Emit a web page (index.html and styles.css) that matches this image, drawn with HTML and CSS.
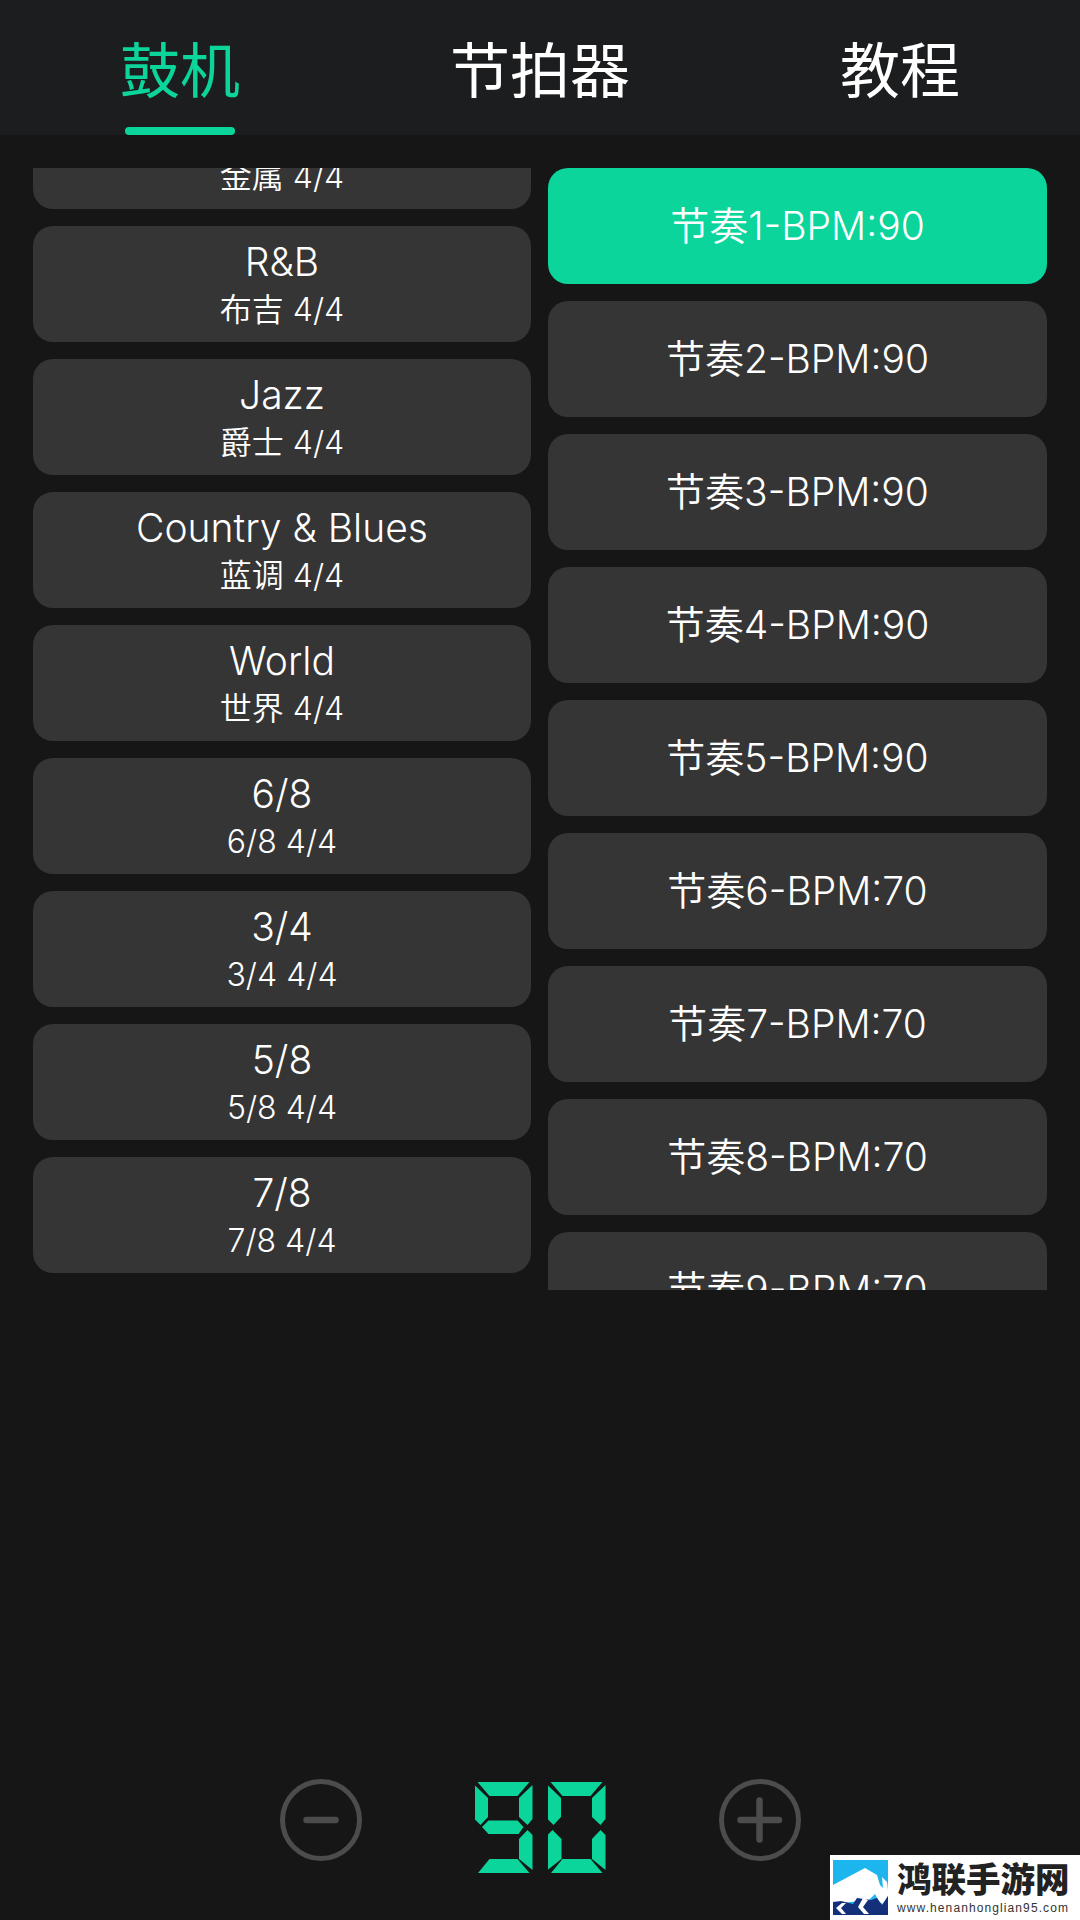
FILE: index.html
```html
<!DOCTYPE html>
<html lang="zh-CN">
<head>
  <meta charset="UTF-8" />
  <meta name="viewport" content="width=device-width, initial-scale=1.0"/>
  <title>鼓机</title>
  <link rel="stylesheet" href="styles.css">
</head>
<body>
  <nav class="tabs">
    <a class="tab active">鼓机</a>
    <a class="tab">节拍器</a>
    <a class="tab">教程</a>
  </nav>

  <main class="lists">
    <div class="list">
      <div class="list-inner scrolled">
        <div class="card"><div class="title">Metal</div><div class="sub">金属 4/4</div></div>
        <div class="card"><div class="title">R&amp;B</div><div class="sub">布吉 4/4</div></div>
        <div class="card"><div class="title">Jazz</div><div class="sub">爵士 4/4</div></div>
        <div class="card"><div class="title">Country &amp; Blues</div><div class="sub">蓝调 4/4</div></div>
        <div class="card"><div class="title">World</div><div class="sub">世界 4/4</div></div>
        <div class="card"><div class="title">6/8</div><div class="sub">6/8 4/4</div></div>
        <div class="card"><div class="title">3/4</div><div class="sub">3/4 4/4</div></div>
        <div class="card"><div class="title">5/8</div><div class="sub">5/8 4/4</div></div>
        <div class="card"><div class="title">7/8</div><div class="sub">7/8 4/4</div></div>
      </div>
    </div>
    <div class="list">
      <div class="list-inner">
        <div class="card selected"><div class="title">节奏1-BPM:90</div></div>
        <div class="card"><div class="title">节奏2-BPM:90</div></div>
        <div class="card"><div class="title">节奏3-BPM:90</div></div>
        <div class="card"><div class="title">节奏4-BPM:90</div></div>
        <div class="card"><div class="title">节奏5-BPM:90</div></div>
        <div class="card"><div class="title">节奏6-BPM:70</div></div>
        <div class="card"><div class="title">节奏7-BPM:70</div></div>
        <div class="card"><div class="title">节奏8-BPM:70</div></div>
        <div class="card"><div class="title">节奏9-BPM:70</div></div>
      </div>
    </div>
  </main>

  <section class="tempo">
    <svg class="round-btn" viewBox="0 0 82 82" aria-label="减">
      <circle cx="41" cy="41" r="38.5" />
      <line x1="26.5" y1="41" x2="55.5" y2="41" />
    </svg>

    <!-- seven segment readout, one span per lit segment -->
    <div class="readout" role="img" aria-label="90">
      <div class="digit">
        <span class="seg seg-a"></span><span class="seg seg-b"></span><span class="seg seg-c"></span>
        <span class="seg seg-d"></span><span class="seg seg-f"></span><span class="seg seg-g"></span>
      </div>
      <div class="digit">
        <span class="seg seg-a"></span><span class="seg seg-b"></span><span class="seg seg-c"></span>
        <span class="seg seg-d"></span><span class="seg seg-e"></span><span class="seg seg-f"></span>
      </div>
    </div>

    <svg class="round-btn" viewBox="0 0 82 82" aria-label="加">
      <circle cx="41" cy="41" r="38.5" />
      <line x1="21.5" y1="41" x2="60" y2="41" />
      <line x1="40.5" y1="21.5" x2="40.5" y2="60.5" />
    </svg>
  </section>

  <div class="watermark">
    <svg class="wm-icon" viewBox="0 0 55 55">
      <rect width="55" height="55" fill="#1db5ee" />
      <path fill="#fff" d="M0 25 L32 8 L44 15 L47 25 L50 28 L49 17 L54 22 L55 30 L55 36 L50 44 L46 42 L42 34 L36 40 L0 44 Z" />
      <path fill="#14307a" d="M0 42 L8 41 L20 44 L24 38 L38 40 L44 38 L49 45 L55 36 L55 55 L0 55 Z" />
      <path fill="#fff" d="M9 43 L3 48 L9 54 L13 54 L8 48 L13 43 Z M30 38 L25 47 L31 54 L36 54 L30 47 L35 40 Z" />
    </svg>
    <div class="wm-text">
      <div class="wm-name">鸿联手游网</div>
      <div class="wm-url">www.henanhonglian95.com</div>
    </div>
  </div>
</body>
</html>
```

FILE: styles.css
```css
:root {
  --bg-color: #161616;
  --bar-color: #1c1d1f;
  --card-color: #353535;
  --accent-color: #0bd59a;
  --text-color: #ffffff;
  --muted-color: #4c4c4c;
}

* {
  box-sizing: border-box;
}

body {
  margin: 0;
  width: 1080px;
  height: 1920px;
  overflow: hidden;
  position: relative;
  font-family: Inter, "Noto Sans CJK SC", sans-serif;
  background-color: var(--bg-color);
  color: var(--text-color);
}

.tabs {
  display: grid;
  grid-template-columns: repeat(3, 1fr);
  height: 135px;
  background: var(--bar-color);
}

.tab {
  position: relative;
  display: flex;
  align-items: center;
  justify-content: center;
  height: 135px;
  padding-bottom: 2px;
  font-size: 60px;
}

.tab.active {
  color: var(--accent-color);
}

.tab.active::after {
  content: "";
  position: absolute;
  left: 125px;
  bottom: 0;
  width: 110px;
  height: 8px;
  border-radius: 4px;
  background: var(--accent-color);
}

.lists {
  display: grid;
  grid-template-columns: 498px 499px;
  gap: 17px;
  height: 1122px;
  margin-top: 33px;
  padding: 0 33px;
}

.list {
  overflow: hidden;
}

.list-inner {
  display: flex;
  flex-direction: column;
  gap: 17px;
}

.list-inner.scrolled {
  margin-top: -75px;
}

.card {
  height: 116px;
  flex-shrink: 0;
  display: flex;
  flex-direction: column;
  align-items: center;
  justify-content: center;
  border-radius: 20px;
  background: var(--card-color);
}

.card.selected {
  background: var(--accent-color);
}

.title {
  font-size: 39px;
  font-weight: 350;
  line-height: 48px;
}

.sub {
  font-size: 32px;
  font-weight: 350;
  line-height: 44px;
  margin: 2px 0 -2px;
}

.tempo {
  display: flex;
  justify-content: center;
  align-items: flex-start;
  gap: 113px;
  padding-top: 489px;
}

.round-btn {
  width: 82px;
  height: 82px;
  fill: none;
  stroke: var(--muted-color);
  stroke-width: 5;
}

.round-btn line {
  stroke-width: 6.5;
  stroke-linecap: round;
}

.readout {
  display: flex;
  gap: 15px;
  margin-top: 3px;
}

.digit {
  display: grid;
  width: 58px;
  height: 91px;
}

.seg {
  grid-area: 1 / 1;
  background: var(--accent-color);
}

.seg-a { clip-path: polygon(3px 0, 55px 0, 43px 14px, 15px 14px); }
.seg-b { clip-path: polygon(58px 3px, 58px 37px, 53px 43px, 44.5px 35px, 44.5px 16px); }
.seg-c { clip-path: polygon(58px 53px, 58px 88px, 44.5px 77px, 44.5px 57px, 53px 48px); }
.seg-d { clip-path: polygon(3.5px 91px, 15px 77px, 43px 77px, 55px 91px); }
.seg-e { clip-path: polygon(5px 48px, 14px 57px, 14px 77px, 0 88px, 0 53px); }
.seg-f { clip-path: polygon(0 3px, 13.5px 16px, 13.5px 35px, 6px 43px, 0 37px); }
.seg-g { clip-path: polygon(7.5px 45px, 14px 38.5px, 43px 38.5px, 49px 45px, 44px 52px, 14px 52px); }

.watermark {
  position: absolute;
  right: 0;
  bottom: 0;
  width: 250px;
  height: 65px;
  display: flex;
  align-items: flex-start;
  gap: 9px;
  padding: 5px 0 0 3px;
  background: #fff;
  color: #222;
}

.wm-icon {
  width: 55px;
  height: 55px;
  flex-shrink: 0;
}

.wm-name {
  font-size: 34.5px;
  font-weight: 900;
  line-height: 40px;
}

.wm-url {
  font-family: "Liberation Sans", sans-serif;
  font-size: 12px;
  line-height: 12px;
  letter-spacing: 1.1px;
  margin-top: 2px;
  color: #333;
}
```
